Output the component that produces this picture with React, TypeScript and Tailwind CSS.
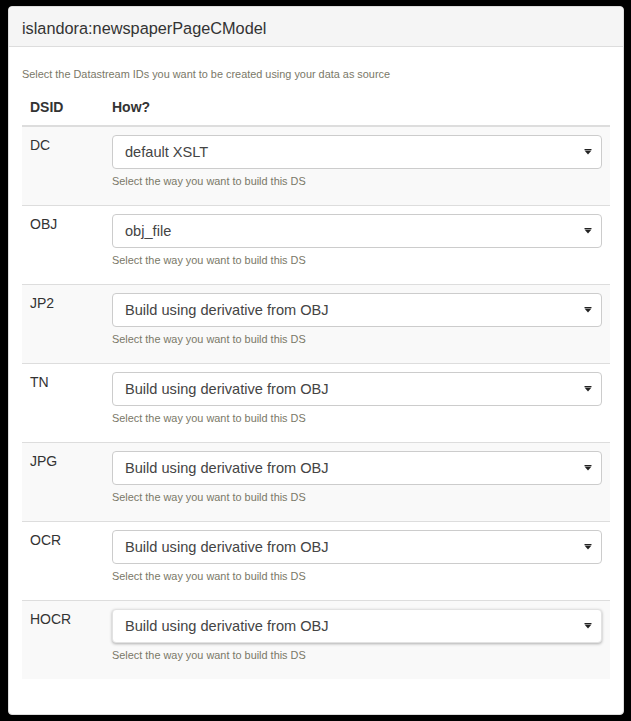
const rows = [
  { dsid: 'DC', value: 'default XSLT' },
  { dsid: 'OBJ', value: 'obj_file' },
  { dsid: 'JP2', value: 'Build using derivative from OBJ' },
  { dsid: 'TN', value: 'Build using derivative from OBJ' },
  { dsid: 'JPG', value: 'Build using derivative from OBJ' },
  { dsid: 'OCR', value: 'Build using derivative from OBJ' },
  { dsid: 'HOCR', value: 'Build using derivative from OBJ', focused: true },
];

function Caret() {
  return (
    <svg width="8" height="6" viewBox="0 0 8 6" className="shrink-0">
      <rect x="0.5" y="0" width="7" height="1" fill="#222" />
      <path d="M0.5 1.5 H7.5 L4 5.5 Z" fill="#222" />
    </svg>
  );
}

export default function App() {
  return (
    <div
      className="min-h-[721px] w-[631px] bg-black pt-[6px] pb-[6px] pl-[8px] pr-[7px]"
      style={{ fontFamily: '"Liberation Sans", Arial, sans-serif' }}
    >
      <div className="h-[709px] rounded-[4px] border border-[#dddddd] bg-white overflow-hidden">
        <div className="h-[40px] border-b border-[#dddddd] bg-[#f5f5f5] px-[13px] pt-[3px] flex items-center">
          <h3 className="text-[16.3px] leading-[18px] text-[#333333]">islandora:newspaperPageCModel</h3>
        </div>
        <div className="px-[13px] pt-[20px]">
          <p className="text-[10.9px] leading-[15px] text-[#7a7868]">
            Select the Datastream IDs you want to be created using your data as source
          </p>
          <table className="mt-[8px] w-full border-collapse">
            <thead>
              <tr className="border-b-2 border-[#dddddd]">
                <th className="w-[82px] px-[8px] py-[8px] text-left text-[14px] leading-[19px] font-bold text-[#333333]">DSID</th>
                <th className="px-[8px] py-[8px] text-left text-[14px] leading-[19px] font-bold text-[#333333]">How?</th>
              </tr>
            </thead>
            <tbody>
              {rows.map((r, i) => (
                <tr key={r.dsid} className={`border-t border-[#dddddd] ${i % 2 === 0 ? 'bg-[#f9f9f9]' : 'bg-white'}`}>
                  <td className="align-top px-[8px] pt-[8px] pb-[8px] text-[14px] leading-[20px] text-[#333333]">{r.dsid}</td>
                  <td className="align-top px-[8px] pt-[8px] pb-[8px]">
                    <div
                      className={`h-[34px] rounded-[4px] bg-white flex items-center justify-between pl-[12px] pr-[9px] ${
                        r.focused
                          ? 'border border-[#e2e2e2] shadow-[0_1px_3px_rgba(0,0,0,0.3)]'
                          : 'border border-[#cccccc]'
                      }`}
                    >
                      <span className="text-[14.6px] leading-[20px] text-[#444444]">{r.value}</span>
                      <Caret />
                    </div>
                    <p className="mt-[5px] mb-[8px] text-[10.9px] leading-[15px] text-[#7a7868]">
                      Select the way you want to build this DS
                    </p>
                  </td>
                </tr>
              ))}
            </tbody>
          </table>
        </div>
      </div>
    </div>
  );
}
